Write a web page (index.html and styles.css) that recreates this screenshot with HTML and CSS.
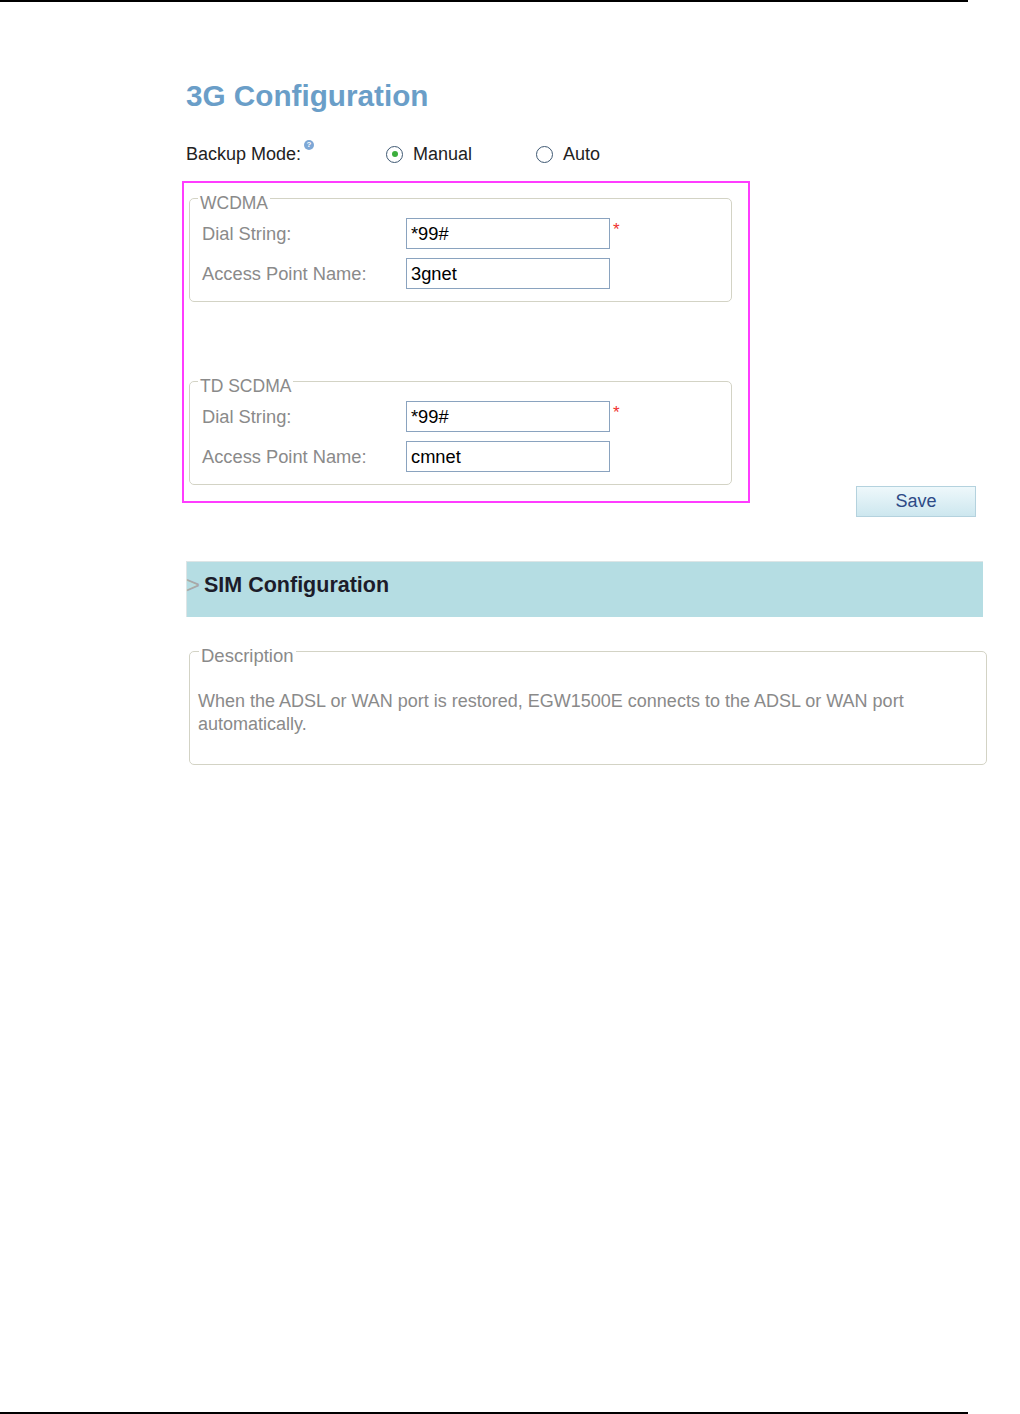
FILE: index.html
```html
<!DOCTYPE html>
<html>
<head>
<meta charset="utf-8">
<link rel="stylesheet" href="styles.css">
</head>
<body>
<div class="page">
  <div class="rule"></div>
  <main class="content">
    <h1 class="title">3G Configuration</h1>
    <div class="backup">
      <span class="backup-label">Backup Mode:<span class="help">?</span></span>
      <label class="opt"><span class="radio checked"></span>Manual</label>
      <label class="opt"><span class="radio"></span>Auto</label>
    </div>
    <div class="config">
      <div class="highlight">
        <fieldset class="group">
          <legend>WCDMA</legend>
          <div class="row"><span class="lbl">Dial String:</span><span class="field">*99#</span><span class="req">*</span></div>
          <div class="row"><span class="lbl">Access Point Name:</span><span class="field">3gnet</span></div>
        </fieldset>
        <fieldset class="group second">
          <legend>TD SCDMA</legend>
          <div class="row"><span class="lbl">Dial String:</span><span class="field">*99#</span><span class="req">*</span></div>
          <div class="row"><span class="lbl">Access Point Name:</span><span class="field">cmnet</span></div>
        </fieldset>
      </div>
      <button class="save">Save</button>
    </div>
    <div class="sim"><span class="arrow">&gt;</span>SIM Configuration</div>
    <fieldset class="desc">
      <legend>Description</legend>
      <p>When the ADSL or WAN port is restored, EGW1500E connects to the ADSL or WAN port automatically.</p>
    </fieldset>
  </main>
  <div class="rule bottom"></div>
</div>
</body>
</html>
```
FILE: styles.css
```css
html, body { margin: 0; padding: 0; background: #fff; }
body { font-family: "Liberation Sans", Arial, sans-serif; }
.page { height: 1414px; display: flex; flex-direction: column; }
.rule { width: 968px; height: 2px; background: #000; flex: none; }
.rule.bottom { margin-top: auto; }
.content { padding-left: 182px; }

.title {
  margin: 76px 0 0 4px;
  font-size: 29.7px; line-height: 36px; font-weight: bold;
  color: #6a9ec8;
}

.backup {
  margin: 28px 0 0 4px; height: 24px;
  display: flex; align-items: center;
  font-size: 18px; color: #222;
}
.backup-label { width: 200px; position: relative; }
.help {
  position: absolute; left: 118px; top: -4px;
  width: 10px; height: 10px; border-radius: 50%;
  background: #7da7d6; color: #fff;
  font-size: 8px; line-height: 10px; font-weight: bold; text-align: center;
}
.opt { width: 150px; display: flex; align-items: center; gap: 10px; }
.radio {
  width: 15px; height: 15px; border: 1.5px solid #3e5872; border-radius: 50%;
  background: #fff; display: flex; align-items: center; justify-content: center;
  flex: none;
}
.radio.checked::after {
  content: ""; width: 6px; height: 6px; border-radius: 50%; background: #3cae3c;
}

.config { display: flex; align-items: flex-start; margin-top: 15px; }
.highlight {
  width: 564px; border: 2px solid #ff3cff;
  padding: 0 0 16px 0;
}
.group {
  margin: 0 16px 0 5px; padding: 5px 12px 12px 12px;
  border: 1px solid #d3d3c5; border-radius: 5px;
}
.group.second { margin-top: 64px; }
legend {
  margin-left: -4px; padding: 10px 2px 0 2px;
  font-size: 17.5px; line-height: 20px; color: #8a8a8a;
}
.row { display: flex; align-items: center; height: 31px; }
.row + .row { margin-top: 9px; }
.lbl { width: 204px; font-size: 18.3px; color: #8a8a8a; }
.field {
  box-sizing: border-box; width: 204px; height: 31px;
  border: 1px solid #8aa3bf; padding-left: 4px;
  font-size: 18.3px; line-height: 29px; color: #000;
}
.req {
  align-self: flex-start; margin: 3px 0 0 3px;
  font-size: 17px; line-height: 1; color: #f03030;
}

.save {
  margin: 305px 0 0 106px;
  width: 120px; height: 31px;
  border: 1px solid #b4d2de;
  background: linear-gradient(#eef8fb, #cde7ef);
  font-family: "Liberation Sans", Arial, sans-serif;
  font-size: 18px; color: #2d4a86; padding: 0;
}

.sim {
  margin: 44px 0 0 4px; width: 797px; height: 56px; box-sizing: border-box;
  background: #b5dde3;
  border-top: 1px solid #dde5e6; border-left: 1px solid #dde5e6;
  padding-top: 10px;
  font-size: 21.5px; line-height: 26px; font-weight: bold; color: #1c1c2a;
  display: flex; align-items: flex-start;
}
.arrow {
  font-weight: normal; color: #a8a8a8; width: 18px; margin-left: -1px;
  font-size: 24px; line-height: 26px;
}

.desc {
  margin: 19px 0 0 7px; width: 798px; box-sizing: border-box;
  padding: 24px 8px 28px 8px;
  border: 1px solid #d3d3c5; border-radius: 5px;
}
.desc legend { margin-left: 1px; font-size: 18.5px; }
.desc p { margin: 0; font-size: 18px; line-height: 23px; color: #8a8a8a; }
```
